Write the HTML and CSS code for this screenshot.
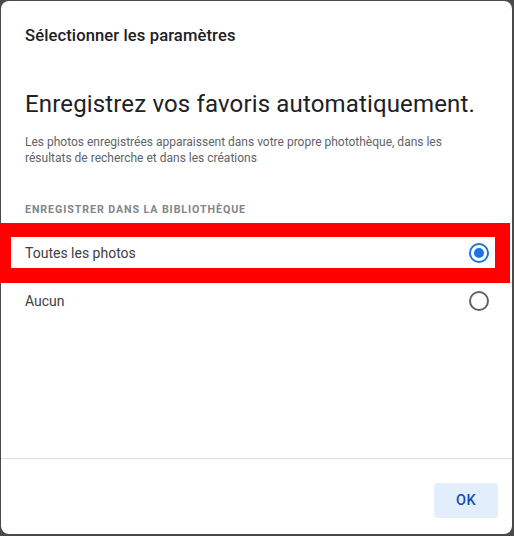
FILE: index.html
```html
<!DOCTYPE html>
<html lang="fr">
<head>
<meta charset="utf-8">
<link rel="stylesheet" href="styles.css">
</head>
<body>
<div class="dialog">
  <div class="header">Sélectionner les paramètres</div>
  <div class="content">
    <h1 class="headline">Enregistrez vos favoris automatiquement.</h1>
    <p class="desc">Les photos enregistrées apparaissent dans votre propre photothèque, dans les résultats de recherche et dans les créations</p>
    <div class="label">ENREGISTRER DANS LA BIBLIOTHÈQUE</div>
    <div class="options">
      <div class="option highlighted">
        <span>Toutes les photos</span>
        <span class="radio checked"></span>
      </div>
      <div class="option">
        <span>Aucun</span>
        <span class="radio"></span>
      </div>
    </div>
  </div>
  <div class="footer">
    <button class="ok">OK</button>
  </div>
</div>
</body>
</html>
```
FILE: styles.css
```css
html, body {
  margin: 0;
  padding: 0;
}
body {
  background: #4a4a4a;
  width: 514px;
  height: 536px;
  overflow: hidden;
  font-family: Roboto, "Liberation Sans", sans-serif;
}
.dialog {
  margin: 1px 2px 0 1px;
  width: 511px;
  height: 533px;
  background: #fff;
  border-radius: 8px;
  display: flex;
  flex-direction: column;
  position: relative;
}
.header {
  padding: 25px 0 0 24px;
  height: 30px;
  font-size: 16.6px;
  font-weight: 500;
  color: #202124;
  letter-spacing: 0.1px;
}
.content {
  flex: 1;
  padding: 0 16px 0 24px;
}
.headline {
  margin: 32px 0 0;
  font-size: 24px;
  font-weight: 400;
  color: #202124;
  line-height: 32px;
  letter-spacing: 0.15px;
}
.desc {
  margin: 14px 0 0;
  font-size: 12px;
  line-height: 16px;
  color: #5f6368;
  width: 430px;
}
.label {
  margin-top: 36px;
  font-size: 10.7px;
  font-weight: 700;
  letter-spacing: 0.9px;
  color: #80868b;
  line-height: 16px;
}
.options {
  margin-top: 11px;
  display: flex;
  flex-direction: column;
}
.option {
  height: 48px;
  display: flex;
  align-items: center;
  justify-content: space-between;
  font-size: 14px;
  color: #3c4043;
  padding-right: 7px;
  position: relative;
}
.option.highlighted::after {
  content: "";
  position: absolute;
  left: -25px;
  top: -6px;
  width: 510px;
  height: 60px;
  border: 14px solid #ff0000;
  border-left-width: 11px;
  border-right-width: 15px;
  border-bottom-width: 15px;
  box-sizing: border-box;
}
.radio {
  width: 20px;
  height: 20px;
  border: 2px solid #5f6368;
  border-radius: 50%;
  box-sizing: border-box;
  display: flex;
  align-items: center;
  justify-content: center;
}
.radio.checked {
  border-color: #1a73e8;
}
.radio.checked::before {
  content: "";
  width: 10px;
  height: 10px;
  border-radius: 50%;
  background: #1a73e8;
}
.footer {
  border-top: 1px solid #dadce0;
  height: 76px;
  display: flex;
  justify-content: flex-end;
  align-items: flex-start;
  padding: 24px 14px 0 0;
  box-sizing: border-box;
}
.ok {
  width: 64px;
  height: 35px;
  border: none;
  border-radius: 4px;
  background: #e3eefc;
  color: #174ea6;
  font-family: Roboto, "Liberation Sans", sans-serif;
  font-size: 14.5px;
  font-weight: 500;
  letter-spacing: 0.3px;
  padding: 0;
}
```
